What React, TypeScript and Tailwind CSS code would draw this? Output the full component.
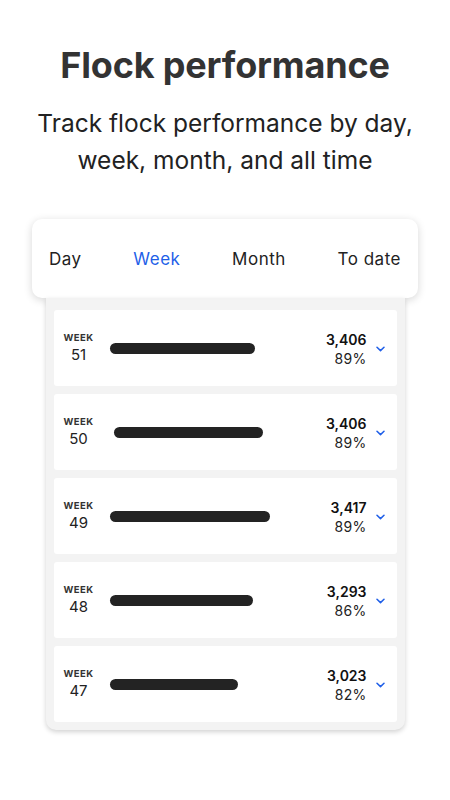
import React from 'react';

type WeekRow = {
  week: number;
  value: string;
  pct: string;
  barLeft: number;
  barWidth: number;
};

const rows: WeekRow[] = [
  { week: 51, value: '3,406', pct: '89%', barLeft: 15, barWidth: 145 },
  { week: 50, value: '3,406', pct: '89%', barLeft: 19, barWidth: 149 },
  { week: 49, value: '3,417', pct: '89%', barLeft: 15, barWidth: 160 },
  { week: 48, value: '3,293', pct: '86%', barLeft: 15, barWidth: 143 },
  { week: 47, value: '3,023', pct: '82%', barLeft: 15, barWidth: 128 },
];

const tabs = ['Day', 'Week', 'Month', 'To date'];

const Chevron = () => (
  <svg width="9" height="6" viewBox="0 0 9 6" fill="none">
    <path d="M1 1.2 L4.5 4.6 L8 1.2" stroke="#1f5fe8" strokeWidth="1.5" strokeLinecap="round" strokeLinejoin="round" />
  </svg>
);

const Row = ({ row }: { row: WeekRow }) => (
  <div className="flex h-[76px] items-center rounded-[3px] bg-white pl-[9px] pr-[12px]">
    <div className="flex w-[32px] flex-col items-center">
      <span className="text-[9.5px] font-bold leading-[12px] tracking-[0.04em] text-[#333]">WEEK</span>
      <span className="mt-[2px] text-[15px] leading-[18px] text-[#222]">{row.week}</span>
    </div>
    <div
      className="h-[11px] rounded-full bg-[#232323]"
      style={{ marginLeft: row.barLeft, width: row.barWidth }}
    />
    <div className="flex-1" />
    <div className="mt-[1px] flex flex-col items-end">
      <span className="text-[14px] font-semibold leading-[18px] text-[#111]">{row.value}</span>
      <span className="mt-[1px] text-[14px] leading-[17px] tracking-[0.02em] text-[#222]">{row.pct}</span>
    </div>
    <div className="ml-[9px] mt-[1px]">
      <Chevron />
    </div>
  </div>
);

export default function App() {
  return (
    <div className="flex min-h-[800px] w-[450px] flex-col items-center bg-white font-['Inter',sans-serif]">
      <h1 className="mt-[43px] text-[36px] font-bold leading-[44px] tracking-[-0.005em] text-[#333]">
        Flock performance
      </h1>
      <p className="mt-[18px] text-center text-[24.5px] leading-[37px] text-[#222]">
        Track flock performance by day,
        <br />
        week, month, and all time
      </p>

      <div className="mt-[40px] flex h-[79px] w-[386px] items-center justify-between rounded-[10px] bg-white px-[17px] pt-[3px] shadow-[0_2px_8px_rgba(0,0,0,0.16)]">
        {tabs.map((t) => (
          <span
            key={t}
            className={
              t === 'Week'
                ? 'text-[17px] tracking-[0.03em] text-[#1f5fe8]'
                : 'text-[17px] tracking-[0.03em] text-[#222]'
            }
          >
            {t}
          </span>
        ))}
      </div>

      <div className="flex w-[359px] flex-col gap-[8px] rounded-b-[10px] bg-[#f3f3f3] px-[8px] pb-[8px] pt-[12px] shadow-[0_2px_5px_rgba(0,0,0,0.18)]">
        {rows.map((r) => (
          <Row key={r.week} row={r} />
        ))}
      </div>
    </div>
  );
}
